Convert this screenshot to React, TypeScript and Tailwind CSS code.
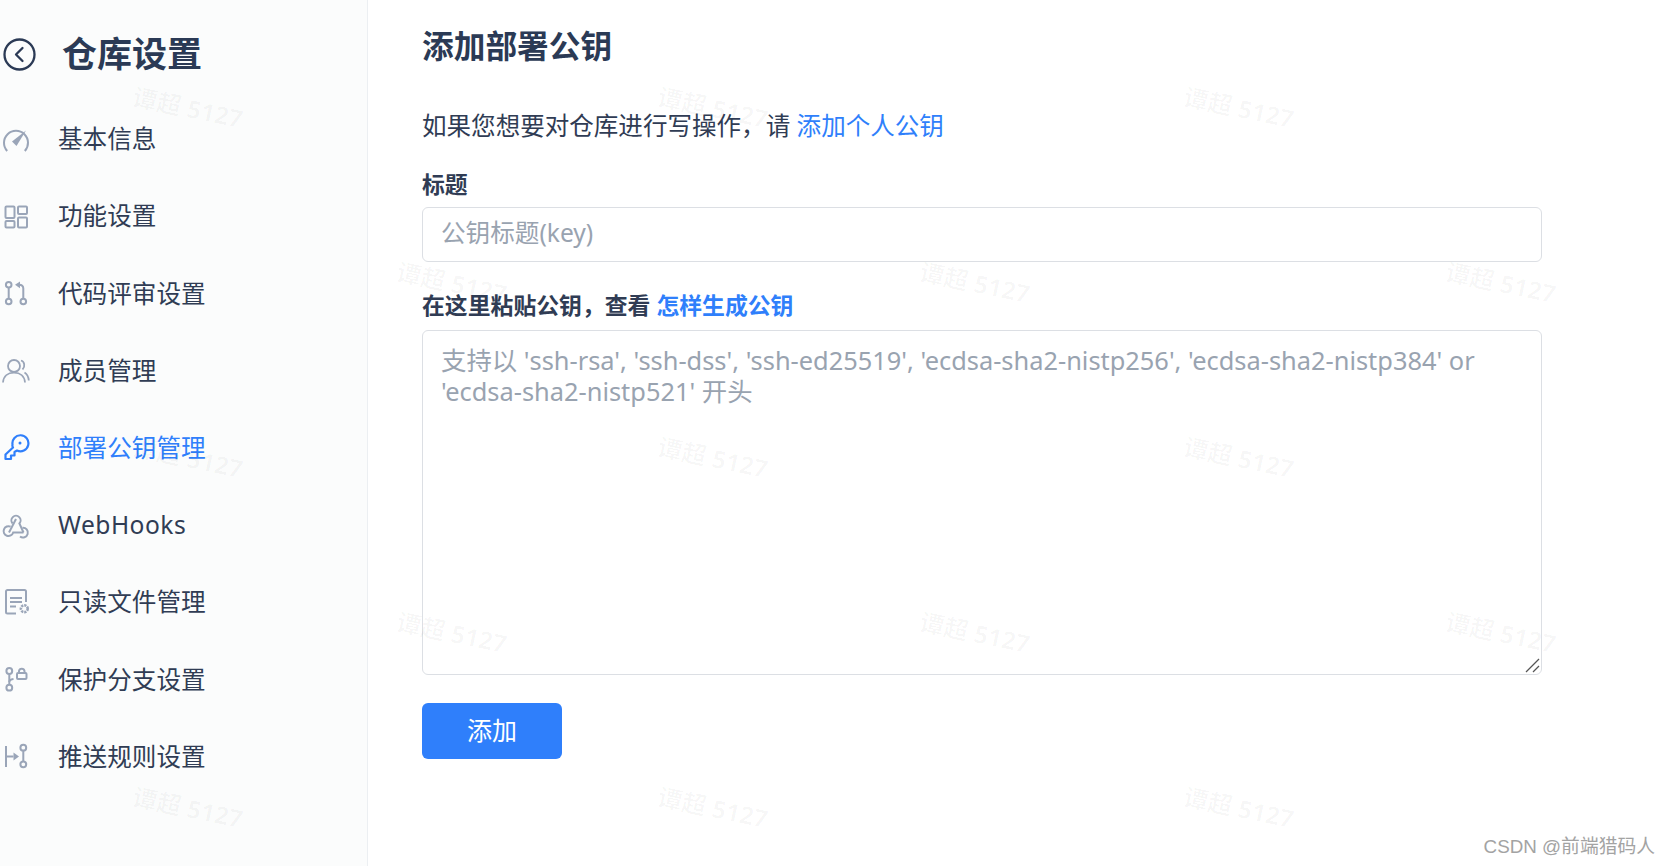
import React from "react";

const Gauge = () => (
  <svg width="28" height="28" viewBox="0 0 28 28" fill="none" stroke="currentColor" strokeWidth="2">
    <path d="M5.2 25A12 12 0 1 1 22.8 25" />
    <path d="M10 15.5L24 4.5L14.5 20Z" fill="currentColor" stroke="none" />
  </svg>
);
const Grid = () => (
  <svg width="28" height="28" viewBox="0 0 28 28" fill="none" stroke="currentColor" strokeWidth="2">
    <rect x="3.5" y="3.5" width="9" height="11.5" rx="1" />
    <rect x="16" y="3.5" width="9" height="7.5" rx="1" />
    <rect x="3.5" y="18" width="9" height="6.5" rx="1" />
    <rect x="16" y="14.5" width="9" height="10" rx="1" />
  </svg>
);
const Pr = () => (
  <svg width="28" height="28" viewBox="0 0 28 28" fill="none" stroke="currentColor" strokeWidth="2">
    <circle cx="6.7" cy="4.8" r="2.8" />
    <circle cx="6.7" cy="21.5" r="2.8" />
    <circle cx="21.3" cy="21.5" r="2.8" />
    <path d="M6.7 7.6V18.7" />
    <path d="M21.3 18.7V8.5C21.3 6 20 4.8 17 4.8" />
    <path d="M13 4.8L18 1.5V8.2Z" fill="currentColor" stroke="none" />
  </svg>
);
const Users = () => (
  <svg width="28" height="28" viewBox="0 0 28 28" fill="none" stroke="currentColor" strokeWidth="1.8">
    <circle cx="12" cy="9" r="6" />
    <path d="M1 25.5C1.5 19 6 15.7 12 15.7S22.5 19 23 25.5" />
    <path d="M19 3.5C22.5 4.5 23.5 9.5 20.5 12.5" />
    <path d="M22.5 15.5C25 17 26.5 20 26.8 23.5" />
  </svg>
);
const Key = () => (
  <svg width="28" height="28" viewBox="0 0 28 28" fill="none" stroke="currentColor" strokeWidth="2.2">
    <path d="M11 13.5L3.5 20.5V25H9V21.5H12.5V18L15 16.5A8 8 0 1 0 10.5 10.5C10.2 11.7 10.4 12.6 11 13.5Z" strokeLinejoin="round" />
    <circle cx="18" cy="9" r="1.5" fill="currentColor" stroke="none" />
  </svg>
);
const Hook = () => (
  <svg width="28" height="28" viewBox="0 0 28 28" fill="none" stroke="currentColor" strokeWidth="2">
    <path d="M10.6 11.5A4.6 4.6 0 1 1 17.4 11.5L21.5 20.5" />
    <path d="M14 7L7 20.5" />
    <path d="M8.6 14.7A4.9 4.9 0 1 0 11.2 20.5H21.5" />
    <path d="M20.5 15.7A4.9 4.9 0 1 1 18 24.5" />
  </svg>
);
const FileGear = () => (
  <svg width="28" height="28" viewBox="0 0 28 28" fill="none" stroke="currentColor" strokeWidth="2">
    <path d="M14 24.5H5.5A1.5 1.5 0 0 1 4 23V2.5A1.5 1.5 0 0 1 5.5 1H22.5A1.5 1.5 0 0 1 24 2.5V13" />
    <path d="M8 9H20M8 13H20M8 17.5H14" />
    <circle cx="22.3" cy="19.7" r="3.4" strokeWidth="2.6" strokeDasharray="2.2 0.9" />
  </svg>
);
const BranchLock = () => (
  <svg width="28" height="28" viewBox="0 0 28 28" fill="none" stroke="currentColor" strokeWidth="2">
    <circle cx="7.3" cy="5" r="2.9" />
    <circle cx="7.3" cy="21.7" r="2.9" />
    <path d="M7.3 8V18.8" />
    <path d="M7.3 16C7.3 14 9 13.3 11.5 13" />
    <rect x="15" y="7" width="9.5" height="6" rx="1" />
    <path d="M17 7V5A2.8 2.8 0 0 1 22.5 5V7" />
  </svg>
);
const Push = () => (
  <svg width="28" height="28" viewBox="0 0 28 28" fill="none" stroke="currentColor" strokeWidth="2">
    <path d="M4 3V24" />
    <path d="M4 13.5H11.5" />
    <path d="M11.5 9.5L17 13.5L11.5 17.5Z" fill="currentColor" stroke="none" />
    <circle cx="21.3" cy="4.7" r="2.9" />
    <circle cx="21.3" cy="21.3" r="2.9" />
    <path d="M21.3 7.7V18.3" />
  </svg>
);

const nav = [
  { label: "基本信息", icon: <Gauge /> },
  { label: "功能设置", icon: <Grid /> },
  { label: "代码评审设置", icon: <Pr /> },
  { label: "成员管理", icon: <Users /> },
  { label: "部署公钥管理", icon: <Key />, active: true },
  { label: "WebHooks", icon: <Hook />, latin: true },
  { label: "只读文件管理", icon: <FileGear /> },
  { label: "保护分支设置", icon: <BranchLock /> },
  { label: "推送规则设置", icon: <Push /> },
];

const marks = [
  "left-[132px] top-[91px]",
  "left-[657px] top-[91px]",
  "left-[1183px] top-[91px]",
  "left-[396px] top-[266px]",
  "left-[919px] top-[266px]",
  "left-[1445px] top-[266px]",
  "left-[132px] top-[441px]",
  "left-[657px] top-[441px]",
  "left-[1183px] top-[441px]",
  "left-[396px] top-[616px]",
  "left-[919px] top-[616px]",
  "left-[1445px] top-[616px]",
  "left-[132px] top-[791px]",
  "left-[657px] top-[791px]",
  "left-[1183px] top-[791px]",
];

export default function App() {
  return (
    <div className="relative flex h-[866px] w-[1671px] overflow-hidden bg-white font-['Noto_Sans','Noto_Sans_CJK_SC',sans-serif] text-[#303c54]">
      <aside className="h-full w-[368px] shrink-0 border-r border-[#eceff2] bg-[#fbfcfc]">
        <div className="flex h-[101px] items-start pt-[29px]">
          <svg className="ml-[3px] mt-[9px] text-[#2b3a55]" width="33" height="33" viewBox="0 0 33 33" fill="none" stroke="currentColor" strokeWidth="2.3">
            <circle cx="16.5" cy="16.5" r="15" />
            <path d="M19.5 10L13 16.5L19.5 23" strokeLinecap="round" strokeLinejoin="round" />
          </svg>
          <h1 className="ml-[26px] text-[35px] font-bold leading-[50px] text-[#2b3a55]">仓库设置</h1>
        </div>
        <nav className="flex flex-col">
          {nav.map((item) => (
            <div
              key={item.label}
              className={`flex h-[77.2px] items-center pl-[2px] text-[24.6px] ${item.active ? "text-[#2f7ffb]" : "text-[#303c54]"} ${item.latin ? "tracking-[0.5px]" : ""}`}
            >
              <span className={`flex h-[28px] w-[28px] shrink-0 items-center justify-center ${item.active ? "text-[#2f7ffb]" : "text-[#9aa5b8]"}`}>
                {item.icon}
              </span>
              <span className="ml-[28px] leading-none">{item.label}</span>
            </div>
          ))}
        </nav>
      </aside>
      <main className="ml-[54px] flex w-[1120px] flex-col">
        <h2 className="mt-[23px] text-[31.7px] font-bold leading-[46px] text-[#2b3a55]">添加部署公钥</h2>
        <p className="mt-[39px] text-[24.55px] leading-[36px]">
          如果您想要对仓库进行写操作，请 <span className="text-[#2f7ffb]">添加个人公钥</span>
        </p>
        <label className="mt-[25px] text-[22.85px] font-bold leading-[32px]">标题</label>
        <input
          className="mt-[6px] h-[55px] w-full rounded-[6px] border border-[#dcdfe4] bg-transparent pb-[5px] pl-[18px] pr-[18px] text-[24.6px] outline-none placeholder:text-[#99a3b0]"
          placeholder="公钥标题(key)"
        />
        <label className="mt-[28px] text-[22.85px] font-bold leading-[32px]">
          在这里粘贴公钥，查看 <span className="text-[#2f7ffb]">怎样生成公钥</span>
        </label>
        <div className="relative mt-[8px] h-[345px] w-full">
          <textarea
            className="block h-full w-full resize-none rounded-[6px] border border-[#dcdfe4] bg-transparent px-[18px] py-[14px] text-[25.4px] leading-[31px] outline-none placeholder:text-[#99a3b0]"
            placeholder="支持以 'ssh-rsa', 'ssh-dss', 'ssh-ed25519', 'ecdsa-sha2-nistp256', 'ecdsa-sha2-nistp384' or 'ecdsa-sha2-nistp521' 开头"
          />
          <svg className="absolute bottom-[2px] right-[2px] text-[#555555]" width="15" height="15" viewBox="0 0 15 15" fill="none" stroke="currentColor" strokeWidth="1.2">
            <path d="M1 14L14 1" />
            <path d="M8 14L14 8" />
          </svg>
        </div>
        <button className="mt-[28px] h-[56px] w-[140px] rounded-[6px] bg-[#2f7ffb] text-[25px] text-white">添加</button>
      </main>
      {marks.map((m) => (
        <div
          key={m}
          className={`pointer-events-none absolute ${m} rotate-[12deg] whitespace-nowrap text-[24.5px] font-bold leading-[34px] text-[#000000]/[0.03]`}
        >
          谭超 5127
        </div>
      ))}
      <div className="absolute bottom-[5px] right-[16px] font-['Liberation_Sans','Noto_Sans_CJK_SC',sans-serif] text-[18.8px] leading-[28px] text-[#a3a3a3]">
        CSDN @前端猎码人
      </div>
    </div>
  );
}
